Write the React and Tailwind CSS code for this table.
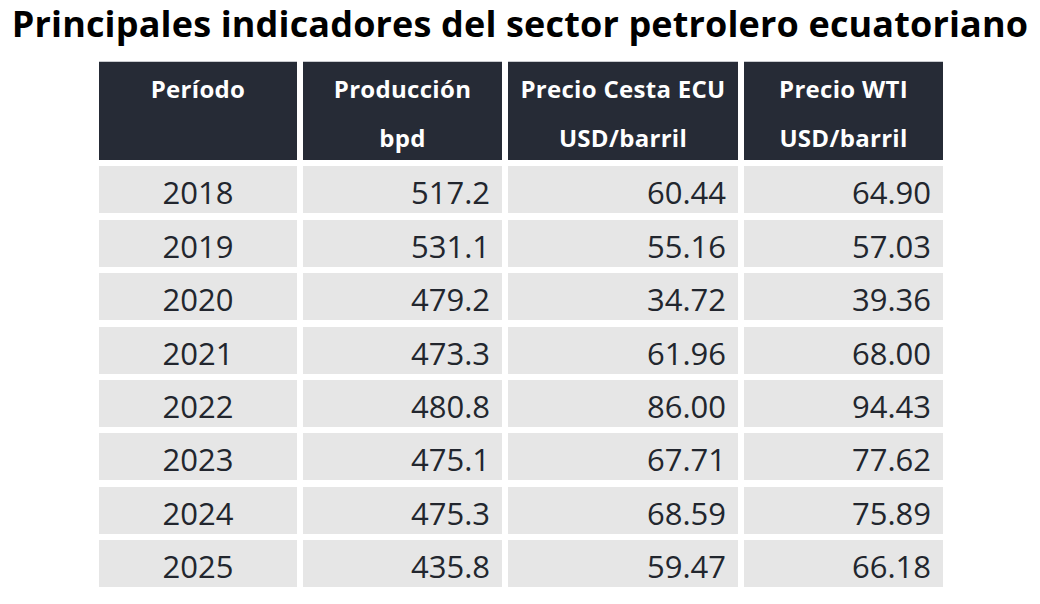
import React from "react";

const rows = [
  ["2018", "517.2", "60.44", "64.90"],
  ["2019", "531.1", "55.16", "57.03"],
  ["2020", "479.2", "34.72", "39.36"],
  ["2021", "473.3", "61.96", "68.00"],
  ["2022", "480.8", "86.00", "94.43"],
  ["2023", "475.1", "67.71", "77.62"],
  ["2024", "475.3", "68.59", "75.89"],
  ["2025", "435.8", "59.47", "66.18"],
];

const headers = [
  ["Período", ""],
  ["Producción", "bpd"],
  ["Precio Cesta ECU", "USD/barril"],
  ["Precio WTI", "USD/barril"],
];

export default function App() {
  return (
    <div className="w-[1040px] h-[604px] bg-white overflow-hidden" style={{ fontFamily: '"Open Sans", "Noto Sans", sans-serif' }}>
      <h1 className="text-center font-bold text-black text-[36px] leading-[48px] tracking-[0.15px] whitespace-nowrap">
        Principales indicadores del sector petrolero ecuatoriano
      </h1>
      <div className="ml-[99px] mt-[13px] grid grid-cols-[198px_199px_230px_199px] gap-x-[6px] gap-y-[6.4px]">
        {headers.map((h, i) => (
          <div key={i} className="h-[99px] bg-[#262b36] border-t border-[#c9cbcf] text-white font-bold text-[24px] leading-[49px] text-center pt-[2px] tracking-[0.3px] whitespace-nowrap">
            <div>{h[0]}</div>
            <div>{h[1]}</div>
          </div>
        ))}
        {rows.map((r, ri) =>
          r.map((c, ci) => (
            <div
              key={ri + "-" + ci}
              className={
                "h-[47px] bg-[#e6e6e6] text-[#22262e] text-[31px] leading-[41px] pt-[6px] " +
                (ci === 0 ? "text-center" : "text-right pr-[12px]")
              }
            >
              {c}
            </div>
          ))
        )}
      </div>
    </div>
  );
}
